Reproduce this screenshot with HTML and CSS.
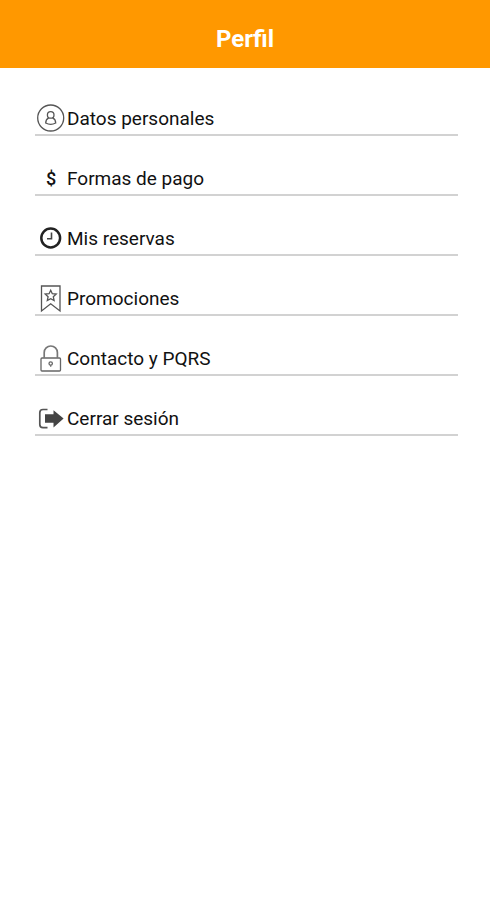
FILE: index.html
```html
<!DOCTYPE html>
<html lang="es">
<head>
<meta charset="utf-8">
<meta name="viewport" content="width=device-width, initial-scale=1">
<title>Perfil</title>
<link rel="stylesheet" href="styles.css">
</head>
<body>
<header class="topbar"><h1 class="title">Perfil</h1></header>
<main>
<nav class="menu">
<a class="item" href="#datos">
<svg class="icon" viewBox="0 0 32 32" aria-hidden="true"><g stroke="#555" stroke-width="1.3"><circle cx="15.7" cy="16" r="13"/><circle cx="15.7" cy="12.9" r="3.3"/><path d="M13.700 15.800C11.800 16.800 10.700 18.500 10.700 21Q15.700 23.600 20.700 21C20.700 18.500 19.600 16.800 17.700 15.800"/></g></svg>
<span class="label">Datos personales</span></a>
<a class="item" href="#pago">
<span class="icon currency" aria-hidden="true">$</span>
<span class="label">Formas de pago</span></a>
<a class="item" href="#reservas">
<svg class="icon" viewBox="0 0 32 32" aria-hidden="true"><circle cx="15.7" cy="16" r="9.4" stroke="#222" stroke-width="2.5"/><path d="M16.5 10.5v6.2H12" stroke="#444" stroke-width="1.6"/></svg>
<span class="label">Mis reservas</span></a>
<a class="item" href="#promociones">
<svg class="icon" viewBox="0 0 32 32" aria-hidden="true"><g stroke="#555" stroke-width="1.3"><path d="M6.5 4h18.5v25L15.7 21.8 6.5 29z"/><path d="M15.7 8.200l1.600 3.500 3.900.4-2.900 2.600.8 3.900-3.400-1.900-3.400 1.900.8-3.900-2.900-2.600 3.900-.4z"/></g></svg>
<span class="label">Promociones</span></a>
<a class="item" href="#contacto">
<svg class="icon" viewBox="0 0 32 32" aria-hidden="true"><g stroke="#666" stroke-width="1.3"><rect x="6" y="16" width="19.5" height="13" rx="1"/><path d="M9.200 16v-5.400a6.600 6.600 0 0 1 13.200 0V16" stroke="#777" stroke-width="1.700"/><path d="M15.7 24.800v-1.600"/><circle cx="15.700" cy="21.500" r="1.700"/></g></svg>
<span class="label">Contacto y PQRS</span></a>
<a class="item" href="#salir">
<svg class="icon" viewBox="0 0 32 32" aria-hidden="true"><path d="M12.500 7.500H8Q4.800 7.500 4.800 10.700V22.500Q4.800 25.700 8 25.700h4.500" stroke="#555" stroke-width="1.700"/><path d="M10 12.200h8.500V8.200L28.600 16.600 18.500 25.400v-4.600H10z" fill="#444"/></svg>
<span class="label">Cerrar sesión</span></a>
</nav>
</main>
</body>
</html>
```
FILE: styles.css
```css
* { box-sizing: border-box; }
body { margin: 0; background: #fff; color: #111; font-family: Roboto, "Liberation Sans", sans-serif; }
.topbar { padding: 25px 16px 15px; background: #ff9800; text-align: center; }
.title { margin: 0; color: #fff; font-size: 24px; line-height: 28px; font-weight: 700; }
.menu { display: flex; flex-direction: column; gap: 26px; padding: 34px 32px 34px 35px; }
.item { display: flex; align-items: center; height: 34px; border-bottom: 2px solid #d2d2d2; color: inherit; font-size: 19px; line-height: 24px; text-decoration: none; }
.icon { flex: none; width: 32px; height: 32px; fill: none; }
.label, .currency { padding-top: 2px; }
.currency { display: flex; align-items: center; justify-content: center; font-size: 18px; font-weight: 500; }
```
